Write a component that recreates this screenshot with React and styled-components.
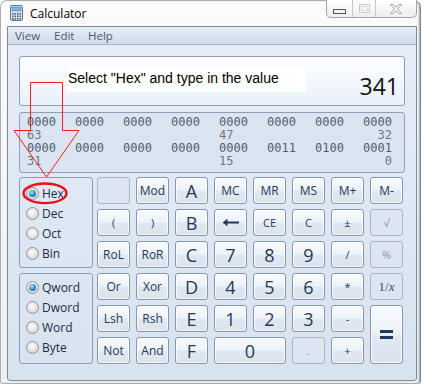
import React from "react";
import styled, { createGlobalStyle } from "styled-components";

const GlobalStyle = createGlobalStyle`
  html, body {
    margin: 0;
    padding: 0;
    background: #ffffff;
  }
  body {
    font-family: "Open Sans", "Noto Sans", sans-serif;
  }
`;

const Stage = styled.div`
  position: relative;
  width: 423px;
  height: 384px;
  overflow: hidden;
`;

const Window = styled.div`
  box-sizing: border-box;
  width: 421px;
  height: 384px;
  border: 1px solid #a9aeb5;
  border-right-color: #80868e;
  border-radius: 7px 7px 3px 3px;
  background: linear-gradient(#fbfbfb, #efefef);
  box-shadow: inset -2px 0 2px -1px #9a9fa6;
  display: flex;
  flex-direction: column;
`;

const TitleBar = styled.div`
  height: 25px;
  display: flex;
  align-items: flex-start;
  padding-left: 9px;
`;

const AppIcon = styled.svg`
  margin-top: 4px;
  flex: none;
`;

const Title = styled.span`
  margin: 4px 0 0 7px;
  font-size: 12px;
  color: #000;
`;

const Spacer = styled.div`
  flex: 1;
`;

const CaptionGroup = styled.div`
  display: flex;
  height: 17px;
  margin: -1px 3px 0 0;
  border: 1px solid #a0a5ac;
  border-top: none;
  border-radius: 0 0 5px 5px;
  background: linear-gradient(#ffffff, #ededed);
  overflow: hidden;
`;

const CaptionButton = styled.div`
  box-sizing: border-box;
  width: ${(p) => p.$w}px;
  display: flex;
  align-items: ${(p) => (p.$low ? "flex-end" : "center")};
  justify-content: center;
  padding-bottom: ${(p) => (p.$low ? 3 : 0)}px;
  & + & {
    border-left: 1px solid #c4c8cd;
  }
`;

const Client = styled.div`
  box-sizing: border-box;
  width: 410px;
  height: 355px;
  margin-left: 6px;
  border: 1px solid #7f8a98;
  border-radius: 0 0 3px 3px;
  background: linear-gradient(#e5edf8, #d8e3f0);
  display: flex;
  flex-direction: column;
`;

const MenuBar = styled.div`
  height: 17px;
  display: flex;
  align-items: center;
  padding-left: 7px;
  border-bottom: 1px solid #a6b5c8;
  background: linear-gradient(#e4ecf7, #d2dde9);
`;

const MenuItem = styled.span`
  width: ${(p) => p.$w}px;
  font-size: 11.5px;
  color: #4d5a6a;
`;

const Body = styled.div`
  padding: 11px 11px 0 11px;
  display: flex;
  flex-direction: column;
`;

const Display = styled.div`
  box-sizing: border-box;
  height: 50px;
  border: 1px solid #8e9eb3;
  border-radius: 3px;
  background: linear-gradient(#fdfeff, #eaf1fa);
  display: flex;
  align-items: flex-end;
  justify-content: flex-end;
  padding: 0 5px 7px 0;
`;

const Value = styled.span`
  font-size: 23px;
  line-height: 1;
  color: #111;
`;

const Binary = styled.div`
  box-sizing: border-box;
  height: 61px;
  margin-top: 6px;
  border: 1px solid #8e9eb3;
  border-radius: 3px;
  background: #dbe5f1;
  padding: 3px 0 0 7px;
  display: grid;
  grid-template-columns: repeat(8, 29px);
  grid-auto-rows: 13px;
  column-gap: 19px;
  font-family: "DejaVu Sans Mono", "Liberation Mono", monospace;
  font-size: 12px;
  line-height: 13px;
`;

const Bits = styled.span`
  color: #4f5d70;
`;

const BitLabel = styled.span`
  grid-column: ${(p) => p.$col};
  justify-self: ${(p) => (p.$right ? "end" : "start")};
  color: #6c7582;
`;

const Keypad = styled.div`
  margin-top: 4px;
  display: flex;
  gap: 4px;
`;

const Groups = styled.div`
  display: flex;
  flex-direction: column;
  gap: 5px;
`;

const RadioGroup = styled.div`
  box-sizing: border-box;
  width: 74px;
  height: 91px;
  border: 1px solid #8e9cb1;
  border-radius: 3px;
  padding: ${(p) => p.$top}px 0 0 6px;
  display: flex;
  flex-direction: column;
`;

const RadioRow = styled.div`
  height: 20px;
  display: flex;
  align-items: center;
  gap: 3px;
  font-size: 12px;
  color: #1f2b45;
`;

const RadioDot = styled.span`
  box-sizing: border-box;
  width: 13px;
  height: 13px;
  border-radius: 50%;
  border: 1px solid #939393;
  background: radial-gradient(circle at 45% 40%, #ffffff, #dcdcdc 65%, #c6c6c6);
  display: flex;
  align-items: center;
  justify-content: center;
  &::after {
    content: "";
    display: ${(p) => (p.$on ? "block" : "none")};
    width: 7px;
    height: 7px;
    border-radius: 50%;
    background: radial-gradient(circle at 40% 35%, #a8e6ff, #2a8fd4 50%, #0c4a86);
  }
`;

const Keys = styled.div`
  display: grid;
  grid-template-columns: repeat(8, 33px);
  grid-auto-rows: 27px;
  gap: 5px 6px;
`;

const Key = styled.div`
  box-sizing: border-box;
  grid-column: span ${(p) => p.$cols || 1};
  grid-row: span ${(p) => p.$rows || 1};
  border: 1px solid ${(p) => (p.$off ? "#a9b6c7" : "#8797ad")};
  border-radius: 3px;
  background: ${(p) =>
    p.$off
      ? "#dce5f0"
      : "linear-gradient(#f8fafd 0%, #eef3f9 46%, #e0e8f2 54%, #dbe3ee 100%)"};
  box-shadow: ${(p) => (p.$off ? "none" : "inset 0 0 0 1px rgba(255,255,255,0.75)")};
  color: ${(p) => (p.$off ? "#8596ab" : "#1e395b")};
  font-size: ${(p) => (p.$big ? 18 : p.$small ? 11 : 12)}px;
  display: flex;
  align-items: center;
  justify-content: center;
  user-select: none;
`;

const Recip = styled.span`
  font-family: "Liberation Serif", "DejaVu Serif", serif;
  font-size: 13px;
  color: #48407a;
  i {
    font-style: italic;
  }
`;

const EqualsMark = styled.span`
  width: 13px;
  height: 3px;
  border-top: 3px solid #1e395b;
  border-bottom: 3px solid #1e395b;
`;

const Note = styled.div`
  position: absolute;
  left: 67px;
  top: 68px;
  width: 239px;
  height: 24px;
  box-sizing: border-box;
  padding-left: 1px;
  background: #ffffff;
  font-family: "Liberation Sans", Arial, sans-serif;
  font-size: 14px;
  line-height: 21px;
  color: #000;
`;

const Marks = styled.svg`
  position: absolute;
  left: 0;
  top: 0;
  pointer-events: none;
`;

const CalcIcon = () => (
  <AppIcon width="13" height="16" viewBox="0 0 13 16">
    <rect x="0.5" y="0.5" width="12" height="15" rx="1.5" fill="#e3ebf4" stroke="#5f7a98" />
    <rect x="2" y="2" width="9" height="4" fill="#7fb6e6" stroke="#3f79b3" strokeWidth="0.6" />
    {[8, 10.5, 13].map((y) =>
      [2, 4.5, 7, 9.5].map((x) => (
        <rect key={`${x}-${y}`} x={x} y={y} width="1.6" height="1.6" fill="#4d5b6b" />
      ))
    )}
  </AppIcon>
);

const BackArrow = () => (
  <svg width="18" height="9" viewBox="0 0 18 9">
    <path d="M17 4.5H4" stroke="#1e395b" strokeWidth="2" />
    <path d="M0.5 4.5L5.5 0.8V8.2Z" fill="#1e395b" />
  </svg>
);

const bases = [
  ["Hex", true],
  ["Dec", false],
  ["Oct", false],
  ["Bin", false],
];
const sizes = [
  ["Qword", true],
  ["Dword", false],
  ["Word", false],
  ["Byte", false],
];

const keys = [
  { l: "", off: true },
  { l: "Mod" },
  { l: "A", big: true },
  { l: "MC" },
  { l: "MR" },
  { l: "MS" },
  { l: "M+" },
  { l: "M-" },
  { l: "(", small: true },
  { l: ")", small: true },
  { l: "B", big: true },
  { l: "back" },
  { l: "CE", small: true },
  { l: "C", small: true },
  { l: "±", small: true },
  { l: "√", small: true, off: true },
  { l: "RoL" },
  { l: "RoR" },
  { l: "C", big: true },
  { l: "7", big: true },
  { l: "8", big: true },
  { l: "9", big: true },
  { l: "/", small: true },
  { l: "%", small: true, off: true },
  { l: "Or" },
  { l: "Xor" },
  { l: "D", big: true },
  { l: "4", big: true },
  { l: "5", big: true },
  { l: "6", big: true },
  { l: "*", small: true },
  { l: "recip", off: true },
  { l: "Lsh" },
  { l: "Rsh" },
  { l: "E", big: true },
  { l: "1", big: true },
  { l: "2", big: true },
  { l: "3", big: true },
  { l: "-", small: true },
  { l: "=", rows: 2 },
  { l: "Not" },
  { l: "And" },
  { l: "F", big: true },
  { l: "0", big: true, cols: 2 },
  { l: ".", small: true, off: true },
  { l: "+", small: true },
];

const keyFace = (k) => {
  if (k.l === "back") return <BackArrow />;
  if (k.l === "recip")
    return (
      <Recip>
        1/<i>x</i>
      </Recip>
    );
  if (k.l === "=") return <EqualsMark />;
  return k.l;
};

const row1 = ["0000", "0000", "0000", "0000", "0000", "0000", "0000", "0000"];
const row2 = ["0000", "0000", "0000", "0000", "0000", "0011", "0100", "0001"];

export default function App() {
  return (
    <Stage>
      <GlobalStyle />
      <Window>
        <TitleBar>
          <CalcIcon />
          <Title>Calculator</Title>
          <Spacer />
          <CaptionGroup>
            <CaptionButton $w={25} $low>
              <svg width="13" height="5" viewBox="0 0 13 5">
                <rect x="0.5" y="0.5" width="12" height="4" fill="#f4f4f4" stroke="#4f5359" />
              </svg>
            </CaptionButton>
            <CaptionButton $w={23}>
              <svg width="11" height="9" viewBox="0 0 11 9">
                <rect x="0.5" y="0.5" width="10" height="8" fill="none" stroke="#c9cccf" />
                <rect x="2.5" y="2.5" width="6" height="4" fill="none" stroke="#d6d8db" />
              </svg>
            </CaptionButton>
            <CaptionButton $w={41}>
              <svg width="12" height="10" viewBox="0 0 12 10">
                <path
                  d="M0.5 0.5H3.5L6 3.3L8.5 0.5H11.5L7.6 5L11.5 9.5H8.5L6 6.7L3.5 9.5H0.5L4.4 5Z"
                  fill="#f2f2f2"
                  stroke="#a9adb2"
                />
              </svg>
            </CaptionButton>
          </CaptionGroup>
        </TitleBar>
        <Client>
          <MenuBar>
            <MenuItem $w={39}>View</MenuItem>
            <MenuItem $w={34}>Edit</MenuItem>
            <MenuItem $w={40}>Help</MenuItem>
          </MenuBar>
          <Body>
            <Display>
              <Value>341</Value>
            </Display>
            <Binary>
              {row1.map((b, i) => (
                <Bits key={`a${i}`}>{b}</Bits>
              ))}
              <BitLabel $col={1}>63</BitLabel>
              <BitLabel $col={5}>47</BitLabel>
              <BitLabel $col={8} $right>
                32
              </BitLabel>
              {row2.map((b, i) => (
                <Bits key={`b${i}`}>{b}</Bits>
              ))}
              <BitLabel $col={1}>31</BitLabel>
              <BitLabel $col={5}>15</BitLabel>
              <BitLabel $col={8} $right>
                0
              </BitLabel>
            </Binary>
            <Keypad>
              <Groups>
                <RadioGroup $top={5}>
                  {bases.map(([name, on]) => (
                    <RadioRow key={name}>
                      <RadioDot $on={on} />
                      {name}
                    </RadioRow>
                  ))}
                </RadioGroup>
                <RadioGroup $top={3}>
                  {sizes.map(([name, on]) => (
                    <RadioRow key={name}>
                      <RadioDot $on={on} />
                      {name}
                    </RadioRow>
                  ))}
                </RadioGroup>
              </Groups>
              <Keys>
                {keys.map((k, i) => (
                  <Key
                    key={i}
                    $off={k.off}
                    $big={k.big}
                    $small={k.small}
                    $cols={k.cols}
                    $rows={k.rows}
                  >
                    {keyFace(k)}
                  </Key>
                ))}
              </Keys>
            </Keypad>
          </Body>
        </Client>
      </Window>
      <Note>Select "Hex" and type in the value</Note>
      <Marks width="423" height="384" viewBox="0 0 423 384">
        <path
          d="M30.5 82.5H62.5V130.5H79L46.5 177L14 130.5H30.5Z"
          fill="none"
          stroke="#ff1a1a"
          strokeWidth="1"
        />
        <ellipse cx="45" cy="193.3" rx="21.5" ry="9.8" fill="none" stroke="#e8101c" strokeWidth="2.4" />
      </Marks>
    </Stage>
  );
}
